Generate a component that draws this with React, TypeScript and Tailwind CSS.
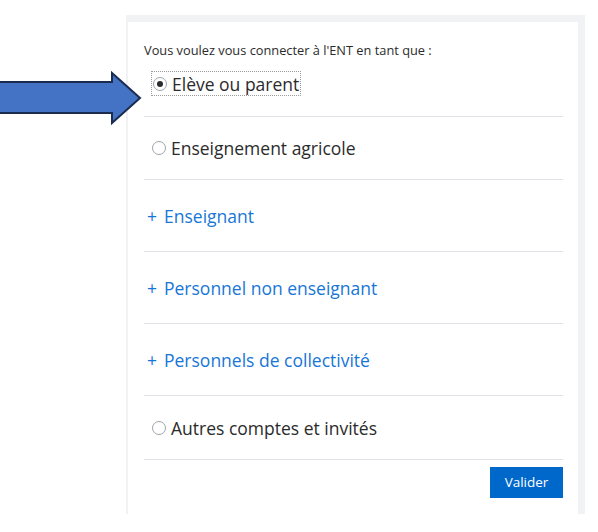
const font = { fontFamily: '"Open Sans", "Noto Sans", sans-serif' }

function Radio({ checked }: { checked?: boolean }) {
  return (
    <span className="flex h-[14px] w-[14px] shrink-0 items-center justify-center rounded-full border border-[#9ea5ad] bg-white">
      {checked && <span className="h-[6px] w-[6px] rounded-full bg-[#2b2b2b]" />}
    </span>
  )
}

function RadioRow({ label, height }: { label: string; height: string }) {
  return (
    <div className={`flex items-center border-b border-[#dfe2e6] pl-[8px] ${height}`}>
      <Radio />
      <span className="ml-[5px] text-[17.5px] leading-[24px] text-[#2b2b2b]">{label}</span>
    </div>
  )
}

function LinkRow({ label }: { label: string }) {
  return (
    <div className="flex h-[72px] items-center border-b border-[#dfe2e6] pl-[3px]">
      <span className="text-[17.5px] leading-[24px] text-[#1776d6]">+</span>
      <span className="ml-[7px] text-[17.5px] leading-[24px] text-[#1776d6]">{label}</span>
    </div>
  )
}

export default function App() {
  return (
    <div className="relative h-[532px] w-[598px] bg-white" style={font}>
      <div className="ml-[126px] mt-[15px] h-[499px] w-[459px] bg-[#f1f2f4] pl-[2px] pr-[7px] pt-[7px]">
        <div className="h-full bg-white pl-[16px] pr-[15px] pt-[20px]">
          {/* Header + selected choice */}
          <div className="border-b border-[#dfe2e6] pb-[20px]">
            <p className="text-[12.8px] leading-[16px] text-[#2b2b2b]">
              Vous voulez vous connecter à l'ENT en tant que :
            </p>
            <div className="ml-[7px] mt-[13px] inline-flex h-[25px] items-center border border-dotted border-[#9a9a9a] pl-[1px] pr-[1px]">
              <Radio checked />
              <span className="ml-[5px] text-[17.5px] leading-[22px] text-[#2b2b2b]">Elève ou parent</span>
            </div>
          </div>

          <RadioRow label="Enseignement agricole" height="h-[63px]" />
          <LinkRow label="Enseignant" />
          <LinkRow label="Personnel non enseignant" />
          <LinkRow label="Personnels de collectivité" />
          <RadioRow label="Autres comptes et invités" height="h-[64px]" />

          <div className="mt-[7px] flex justify-end">
            <button className="h-[31px] w-[73px] bg-[#0068cb] text-[13.5px] text-white">Valider</button>
          </div>
        </div>
      </div>

      {/* Annotation arrow */}
      <svg className="absolute left-0 top-0" width="150" height="120" viewBox="0 0 150 120">
        <polygon
          points="-3,67 112,67 112,58 140,83 112,108 112,98 -3,98"
          fill="#4472c4"
          stroke="#1b2c4f"
          strokeWidth="2"
          strokeLinejoin="miter"
        />
      </svg>
    </div>
  )
}
